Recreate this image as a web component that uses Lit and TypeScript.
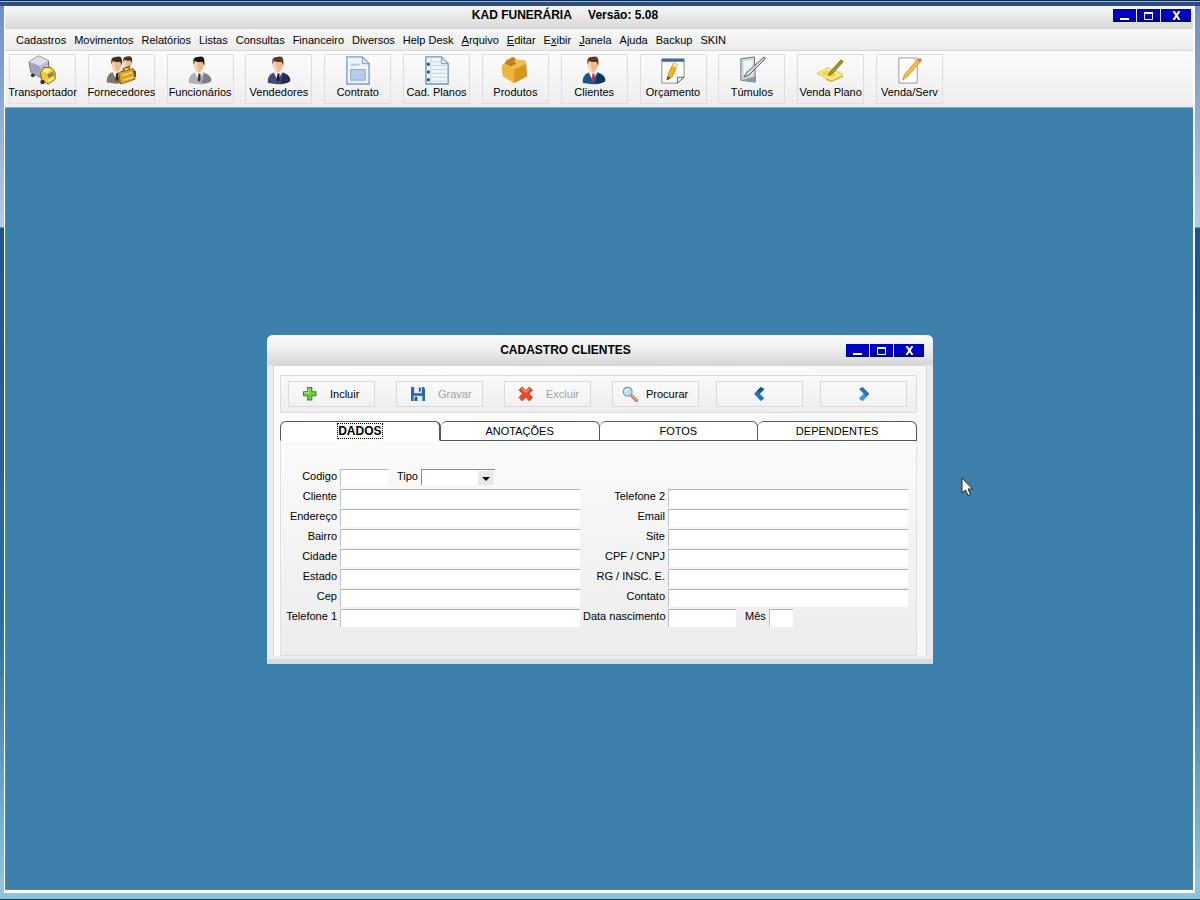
import { LitElement, html, css, svg, nothing } from "lit";
import { customElement, state } from "lit/decorators.js";

const person = (hair: string, suit: string, suitDark: string, tie: string) => svg`
  <path d="M4 29 Q3 21 10 18 L20 18 Q28 21 27 27 Q21 31 12 30 Z" fill=${suit}/>
  <path d="M17 29 L20 19 Q28 21 27 27 Q23 30 17 29Z" fill=${suitDark}/>
  <path d="M10 18 L14 26 L19 18 L17 15 L12 15Z" fill="#f4f4f4"/>
  <path d="M14 19 L16 19 L16 26 L14 28 L13 25Z" fill=${tie}/>
  <path d="M9 7 Q9 16 14 18 Q19 17 20 8 Q17 3 10 5Z" fill="#efb98c"/>
  <path d="M10 9 Q10 15 14 17 Q12 13 12 7Z" fill="#fbdcc0"/>
  <path d="M9 10 Q7 2 13 2 Q20 0 20 6 L20 11 L18 7 Q13 8 10 6Z" fill=${hair}/>`;

const page = (fill: string, edge: string) => svg`
  <path d="M4 2 H20 L27 9 V30 H4Z" fill=${fill} stroke=${edge} stroke-width="1.4"/>
  <path d="M20 2 V9 H27Z" fill="#dbe8f8" stroke=${edge}/>`;

const icons: Record<string, unknown> = {
  truck: svg`
    <path d="M1 7 L11 1 L21 6 L22 19 L14 24 L3 18Z" fill="#b9bcd4" stroke="#55566a"/>
    <path d="M1 7 L11 1 L21 6 L12 11Z" fill="#dedfeb"/>
    <path d="M1 7 L12 11 L13 24 L3 18Z" fill="#a3a5c0"/>
    <path d="M13 18 L16 13 L24 13 L28 18 V25 L21 30 L14 26Z" fill="#f4cd2c" stroke="#856513"/>
    <path d="M15 17 L18 14 L24 14 L20 19Z" fill="#fff09a"/>
    <path d="M20 20 L26 17 L27 21 L21 24Z" fill="#8d8560"/>
    <circle cx="5" cy="21" r="2" fill="#333"/><circle cx="15" cy="28" r="2.300" fill="#333"/>
    <path d="M21 27 L27 24" stroke="#fff5a8" stroke-width="2"/>`,
  suppliers: svg`
    <g transform="translate(11 0) scale(.8)">${person("#49362a", "#8a8178", "#5c544c", "#bb3333")}</g>
    <g transform="translate(-3 0) scale(.98)">${person("#3a2e27", "#81796f", "#514a43", "#222")}</g>
    <path d="M13 18 L28 14 L30 25 L15 30Z" fill="#dca41c" stroke="#8f6509"/>
    <path d="M18 16 V14 L24 12 V15" fill="none" stroke="#8f6509" stroke-width="1.5"/>
    <path d="M17 21 L27 18 M18 26 L28 23" stroke="#ffe277" stroke-width="1.5"/>`,
  employee: person("#15191d", "#adb1b4", "#7b8085", "#34383c"),
  seller: person("#54392c", "#474875", "#262a55", "#15162c"),
  client: person("#5b351f", "#15568c", "#0b3460", "#cc3434"),
  contract: svg`${page("#edf4fd", "#7d9cc8")}
    <path d="M8 10 H17" stroke="#b3c9e8" stroke-width="2"/>
    <rect x="8" y="15" width="15" height="11" fill="#b7cbe8" stroke="#8aa8d3"/>`,
  plans: svg`${page("#edf6fd", "#6f97b7")}
    <path d="M10 7 H20 M10 11 H25 M10 15 H25 M10 19 H25 M10 23 H25 M10 27 H25" stroke="#b5d6ec"/>
    <path d="M9 3 V29" stroke="#bdd5e5"/>
    <path d="M5 8h3v3H5zM5 16h3v3H5zM5 24h3v3H5z" fill="#39516d"/>`,
  box: svg`
    <path d="M2 11 L10 4 L26 6 L28 22 L15 29 L3 22Z" fill="#dd9d20"/>
    <path d="M2 11 L15 15 L15 29 L3 22Z" fill="#efb63c"/>
    <path d="M15 15 L27 9 L28 22 L15 29Z" fill="#d89820"/>
    <path d="M2 11 L10 4 L26 6 L27 9 L15 15Z" fill="#f0bd48"/>
    <path d="M6 6 L13 2 L16 3 L15 7 L17 9 L11 12 L5 9Z" fill="#c58316"/>`,
  budget: svg`
    <path d="M4 4 H27 V23 L20 29 H4Z" fill="#fdfdfd" stroke="#8a8a91"/>
    <rect x="4" y="4" width="23" height="3" fill="#3966b5"/>
    <path d="M20 29 V23 H27Z" fill="#eee" stroke="#666"/>
    <path d="M9 26 L11 19 L16 8 L20 10 L15 22Z" fill="#f5b41d" stroke="#d08a1c"/>
    <path d="M16 8 L20 10 L19 13 L15 11Z" fill="#f6e7c7"/>
    <path d="M9 26 L10 22 L13 24Z" fill="#594230"/>`,
  tomb: svg`
    <path d="M4 4 L18 2 L19 28 L4 26Z" fill="#d3dddf" stroke="#666e73"/>
    <path d="M7 7 L16 5 V18 L7 22Z" fill="#eff6f6"/>
    <path d="M4 26 L19 28 L19 22Z" fill="#8e9ba0"/>
    <path d="M7 23 L10 18 L28 2 L29 4 L12 21Z" fill="#d5dadd" stroke="#555b60"/>`,
  plan: svg`
    <path d="M1 19 L12 13 L28 20 L17 27Z" fill="#f6ea85" stroke="#ddca50"/>
    <path d="M5 19 L12 16 L21 20 L16 23Z" fill="#e5d14b"/>
    <path d="M13 21 L15 17 L26 5 L28 7 L17 19Z" fill="#b58f26" stroke="#83661d"/>
    <path d="M10 25 L16 27 L28 22" fill="none" stroke="#d5bd3a" stroke-width="1.5"/>`,
  sale: svg`
    <path d="M5 3 H24 V29 H5Z" fill="#fdfdfd" stroke="#999"/>
    <path d="M19 3 L24 8 V3Z" fill="#cdd5df"/>
    <path d="M9 26 L11 20 L25 4 L28 6 L14 22Z" fill="#f7bd4a" stroke="#d3922a"/>
    <path d="M24 5 L27 3 L29 5 L27 8Z" fill="#b7886b"/>`,
  add: svg`<path d="M11 3 H19 V11 H27 V19 H19 V27 H11 V19 H3 V11 H11Z" fill="#72cf43" stroke="#328b1d" stroke-width="2"/>
    <path d="M13 5 V13 H5" stroke="#b9ee8f" stroke-width="2" fill="none"/>`,
  save: svg`<path d="M2 2 H26 L29 5 V29 H2Z" fill="#2a62b5"/>
    <rect x="8" y="2" width="15" height="12" fill="#e8f1fb"/><rect x="17" y="3" width="4" height="8" fill="#2a62b5"/>
    <rect x="7" y="19" width="17" height="10" fill="#dfe9f4"/><rect x="9" y="21" width="5" height="8" fill="#214b8d"/>`,
  remove: svg`<path d="M8 2 L15 9 L22 2 L28 8 L21 15 L28 22 L22 29 L15 21 L8 29 L2 22 L9 15 L2 8Z" fill="#ed4a26" stroke="#b02b14" stroke-width="1.5"/>
    <path d="M8 5 L15 12 L22 5" stroke="#ff9b79" stroke-width="2" fill="none"/>`,
  search: svg`<path d="M17 17 L28 28" stroke="#a96f4e" stroke-width="6" stroke-linecap="round"/>
    <path d="M18 17 L28 27" stroke="#efb189" stroke-width="3" stroke-linecap="round"/>
    <circle cx="11" cy="11" r="8.5" fill="#b8e2f3" stroke="#8297a8" stroke-width="2.5"/>
    <path d="M6 11 Q7 6 12 6" stroke="#fff" stroke-width="2.5" fill="none"/>`,
  prev: svg`<path d="M17 2 L24 6 L15 15 L24 24 L17 29 L4 15Z" fill="#2673c4"/><path d="M17 2 L24 6 L15 15 L10 9Z" fill="#1c4f94"/>`,
  next: svg`<path d="M13 2 L6 6 L15 15 L6 24 L13 29 L26 15Z" fill="#2673c4"/><path d="M13 29 L6 24 L15 15 L20 21Z" fill="#4b95dc"/>`,
};

const icon = (name: string, size: number) =>
  html`<svg width=${size} height=${size} viewBox="0 0 31 31" aria-hidden="true">${icons[name]}</svg>`;

@customElement("window-controls")
class WindowControls extends LitElement {
  static styles = css`
    :host { display: flex; gap: 1px; }
    button {
      width: 23px; height: 13px; padding: 0; border: 0;
      background: linear-gradient(#0000b4, #0000d2 50%, #000078);
      display: flex; align-items: center; justify-content: center;
    }
    .close { width: 30px; }
  `;
  render() {
    return html`
      <button aria-label="Minimizar"><svg width="9" height="9"><path d="M0 8h9" stroke="#fff" stroke-width="2"/></svg></button>
      <button aria-label="Maximizar"><svg width="9" height="9"><path d="M.5 1V8.5H8.5V1" fill="none" stroke="#fff"/><path d="M0 2h9" stroke="#fff" stroke-width="2"/></svg></button>
      <button class="close" aria-label="Fechar"><svg width="9" height="9"><path d="M1.5 0 L7.5 9 M7.5 0 L1.5 9" stroke="#fff" stroke-width="2"/></svg></button>
    `;
  }
}

@customElement("client-form")
class ClientForm extends LitElement {
  @state() private tab = 0;

  static styles = css`
    :host {
      display: block; box-sizing: border-box;
      font: 11px/14px "Liberation Sans", Arial, sans-serif; color: #000;
      background: #ececec; border-radius: 6px 6px 0 0;
      padding: 0 5px 3px; border-bottom: 5px solid #d5dcde; border-left: 1px solid #e6eaec; border-right: 1px solid #e6eaec;
    }
    .title {
      display: grid; grid-template-columns: 1fr auto 1fr; align-items: center; height: 30px; margin: 0 -6px;
      padding: 0 9px 0 0; border-radius: 6px 6px 0 0; background: linear-gradient(#fafafa, #ededed 50%, #d6d6d6);
      font-size: 12px; font-weight: bold;
    }
    .title h2 { grid-column: 2; margin: 0; font: inherit; padding-right: 60px; }
    .title window-controls { justify-self: end; }
    .body { border: 1px solid #d6d6d6; border-width: 1px 1px 0; background: linear-gradient(90deg, #fdfdfd, #f7f7f7); padding: 9px 9px 0 6px; }
    .actions {
      display: flex; gap: 17px; padding: 5px 8px 5px 7px;
      border: 1px solid #dcdcdc; background: linear-gradient(#f9f9f9, #eeeeee);
    }
    .edit { display: flex; gap: 21px; }
    .actions button {
      width: 87px; height: 26px; padding: 0 0 0 13px; border: 1px solid #dadada; background: linear-gradient(#fbfbfb, #f1f1f1);
      display: flex; align-items: center; font: inherit; color: #000; gap: 12px;
    }
    .actions .find { padding-left: 9px; gap: 8px; }
    .actions .nav { justify-content: center; padding: 0; }
    .actions button:disabled { color: #a3a3a3; }
    .tabs { display: flex; margin-top: 8px; }
    .tabs button {
      flex: 1; height: 20px; padding: 0; border: 1px solid #55555a; border-left-width: 0; border-radius: 6px 6px 0 0;
      background: #fff; font: inherit; color: #000;
    }
    .tabs button:first-child { border-left-width: 1px; }
    .tabs .on { font-size: 12px; font-weight: bold; border-bottom-color: #fff; border-right-width: 2px; }
    .tabs .on span { outline: 1px dotted #000; }
    .sheet {
      display: grid; grid-template-columns: 56px 1fr 82px 1fr; column-gap: 3px; grid-auto-rows: 20px;
      padding: 28px 8px 26px 0; border: 1px solid #e0e0e0; border-top: 0; background: linear-gradient(#fbfbfb, #ececec);
    }
    label { text-align: right; white-space: nowrap; }
    input, select {
      box-sizing: border-box; width: 100%; height: 18px; margin: 0; padding: 0 2px; border: 0; border-radius: 0;
      border-top: 1px solid #b4b4b4; border-left: 1px solid #c0c0c0; background: #fff; font: inherit; outline: 0;
    }
    .wide { grid-column: 2 / 5; }
    .mix { display: flex; gap: 3px; }
    .mix label { margin-left: 6px; }
    .code { width: 48px; }
    .date { width: 68px; }
    .month { width: 24px; }
    .pick { position: relative; width: 74px; }
    .pick select { appearance: none; height: 16px; border-color: #8a8a8a; }
    .pick svg { position: absolute; right: 1px; top: 2px; background: #e9e9e9; pointer-events: none; }
  `;

  private field(id: string, label: string) {
    return html`<label for=${id}>${label}</label><div><input id=${id} type="text" /></div>`;
  }

  render() {
    const tabs = ["DADOS", "ANOTAÇÕES", "FOTOS", "DEPENDENTES"];
    return html`
      <header class="title"><h2>CADASTRO CLIENTES</h2><window-controls></window-controls></header>
      <div class="body">
        <div class="actions">
          <div class="edit">
            <button>${icon("add", 16)}Incluir</button>
            <button disabled>${icon("save", 16)}Gravar</button>
            <button disabled>${icon("remove", 16)}Excluir</button>
            <button class="find">${icon("search", 16)}Procurar</button>
          </div>
          <button class="nav" aria-label="Anterior">${icon("prev", 16)}</button>
          <button class="nav" aria-label="Próximo">${icon("next", 16)}</button>
        </div>
        <div class="tabs" role="tablist">
          ${tabs.map((t, i) => html`<button role="tab" aria-selected=${i === this.tab} class=${i === this.tab ? "on" : ""}
            @click=${() => (this.tab = i)}><span>${t}</span></button>`)}
        </div>
        <div class="sheet">
          <label for="codigo">Codigo</label>
          <div class="wide mix">
            <input class="code" id="codigo" type="text" />
            <label for="tipo">Tipo</label>
            <div class="pick"><select id="tipo"></select>
              <svg width="16" height="14"><path d="M4 6h8l-4 4z" fill="#000"/></svg></div>
          </div>
          ${this.field("cliente", "Cliente")}${this.field("tel2", "Telefone 2")}
          ${this.field("endereco", "Endereço")}${this.field("email", "Email")}
          ${this.field("bairro", "Bairro")}${this.field("site", "Site")}
          ${this.field("cidade", "Cidade")}${this.field("cpf", "CPF / CNPJ")}
          ${this.field("estado", "Estado")}${this.field("rg", "RG / INSC. E.")}
          ${this.field("cep", "Cep")}${this.field("contato", "Contato")}
          ${this.field("tel1", "Telefone 1")}
          <label for="nasc">Data nascimento</label>
          <div class="mix">
            <input class="date" id="nasc" type="text" />
            <label for="mes">Mês</label><input class="month" id="mes" type="text" />
          </div>
        </div>
      </div>
    `;
  }
}

@customElement("app-root")
class AppRoot extends LitElement {
  static styles = css`
    :host {
      display: flex; box-sizing: border-box; height: 100vh; overflow: hidden; padding: 0 5px 7px 4px;
      font: 11px/14px "Liberation Sans", Arial, sans-serif; color: #000;
      background: linear-gradient(#14294e 0 1px, #9fb4d2 1px 2px, #2a4f86 2px 6px, #6f8fc0 6px, #b4cbe8 227px, #1d5391 228px, #2c6ea8 70%, #8cc4dd 98%, #8cc4dd calc(100% - 1px), #1c3450 calc(100% - 1px));
    }
    .window { flex: 1; display: flex; flex-direction: column; margin-top: 6px; border: 1px solid #fff; border-width: 0 2px 3px 1px; }
    .title {
      display: grid; grid-template-columns: 1fr auto 1fr; align-items: center; height: 23px; box-sizing: border-box;
      padding: 0 2px 5px 0; background: linear-gradient(#f6f6f6, #e8e8e8 50%, #d7d7d7); font-size: 12px; font-weight: bold;
    }
    .title h1 { grid-column: 2; margin: 0; padding-right: 66px; font: inherit; white-space: pre; }
    .title window-controls { justify-self: end; }
    nav { display: flex; gap: 8px; padding: 4px 11px 3px; background: linear-gradient(#f8f8f8, #ebebeb); border-bottom: 1px solid #d6d6d6; }
    nav a { color: inherit; text-decoration: none; }
    .tools { background: linear-gradient(#fcfcfc, #ededed); padding: 3px 4px; border-bottom: 1px solid #a6a2b0; }
    .tools div { display: flex; justify-content: space-between; max-width: 934px; }
    .tools button {
      width: 67px; height: 50px; padding: 0; border: 1px solid #dedede; background: none; font: inherit; color: #000;
      display: flex; flex-direction: column; align-items: center; white-space: nowrap;
    }
    .desk { flex: 1; position: relative; background: #3c80ab; border: 1px solid #5e7f97; border-width: 0 0 1px 1px; }
    client-form { position: absolute; left: 261px; top: 227px; width: 666px; }
    .cursor { position: absolute; left: 955px; top: 369px; }
  `;

  render() {
    const menus = [["", "", "Cadastros"], ["", "", "Movimentos"], ["", "", "Relatórios"], ["", "", "Listas"], ["", "", "Consultas"],
      ["", "", "Financeiro"], ["", "", "Diversos"], ["", "", "Help Desk"], ["", "A", "rquivo"], ["", "E", "ditar"], ["E", "x", "ibir"],
      ["", "J", "anela"], ["", "", "Ajuda"], ["", "", "Backup"], ["", "", "SKIN"]];
    const tools = [["truck", "Transportador"], ["suppliers", "Fornecedores"], ["employee", "Funcionários"], ["seller", "Vendedores"],
      ["contract", "Contrato"], ["plans", "Cad. Planos"], ["box", "Produtos"], ["client", "Clientes"], ["budget", "Orçamento"],
      ["tomb", "Túmulos"], ["plan", "Venda Plano"], ["sale", "Venda/Serv"]];
    return html`
      <div class="window">
        <header class="title"><h1>KAD FUNERÁRIA     Versão: 5.08</h1><window-controls></window-controls></header>
        <nav>${menus.map(([a, b, c]) => html`<a href="#">${a}${b ? html`<u>${b}</u>` : nothing}${c}</a>`)}</nav>
        <div class="tools"><div>${tools.map(([i, t]) => html`<button>${icon(i, 30)}<span>${t}</span></button>`)}</div></div>
        <main class="desk">
          <client-form></client-form>
          <svg class="cursor" width="14" height="20"><path d="M1 1 V16 L4.5 13 L7 18.5 L9.5 17.5 L7 12 H11.5Z" fill="#fff" stroke="#222"/></svg>
        </main>
      </div>
    `;
  }
}
